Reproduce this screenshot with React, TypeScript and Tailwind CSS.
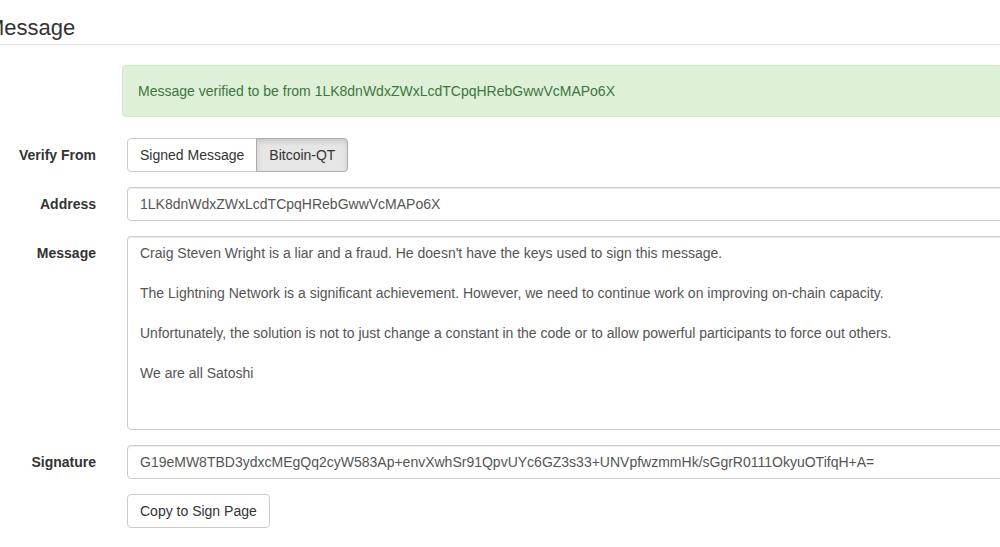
import React from 'react';

const ADDRESS = '1LK8dnWdxZWxLcdTCpqHRebGwwVcMAPo6X';
const SIGNATURE =
  'G19eMW8TBD3ydxcMEgQq2cyW583Ap+envXwhSr91QpvUYc6GZ3s33+UNVpfwzmmHk/sGgrR0111OkyuOTifqH+A=';
const MESSAGE = [
  "Craig Steven Wright is a liar and a fraud. He doesn't have the keys used to sign this message.",
  '',
  'The Lightning Network is a significant achievement. However, we need to continue work on improving on-chain capacity.',
  '',
  'Unfortunately, the solution is not to just change a constant in the code or to allow powerful participants to force out others.',
  '',
  'We are all Satoshi',
].join('\n');

const inputCls =
  'block h-[34px] w-full rounded-[4px] border border-[#ccc] bg-white px-3 text-[14px] text-[#555] shadow-[inset_0_1px_1px_rgba(0,0,0,0.075)] outline-none';

function Row({ label, children, className = '' }: { label: string; children: React.ReactNode; className?: string }) {
  return (
    <div className={`flex gap-[31px] ${className}`}>
      <label className="w-[96px] shrink-0 pt-[7px] text-right text-[14px] font-bold leading-5 text-[#333]">{label}</label>
      <div className="flex-1">{children}</div>
    </div>
  );
}

export default function App() {
  return (
    <div
      className="h-[547px] w-[1000px] overflow-hidden bg-white text-[#333]"
      style={{ fontFamily: '"Liberation Sans", Arial, sans-serif' }}
    >
      <div className="w-[1120px]">
        <h2 className="ml-[-14px] border-b border-[#e5e5e5] pb-1 pt-4 text-[22px] font-normal leading-6">Message</h2>

        <div className="ml-[122px] mt-5 rounded-[4px] border border-[#d6e9c6] bg-[#dff0d8] px-[15px] py-[15px] text-[14px] leading-5 text-[#3c763d]">
          Message verified to be from {ADDRESS}
        </div>

        <Row label="Verify From" className="mt-[21px]">
          <div className="flex text-[14px] leading-5 text-[#333]">
            <button className="h-[34px] rounded-l-[4px] border border-[#ccc] bg-white px-3">Signed Message</button>
            <button className="-ml-px h-[34px] rounded-r-[4px] border border-[#adadad] bg-[#e6e6e6] px-3 shadow-[inset_0_3px_5px_rgba(0,0,0,0.125)]">
              Bitcoin-QT
            </button>
          </div>
        </Row>

        <Row label="Address" className="mt-[15px]">
          <input className={inputCls} readOnly value={ADDRESS} />
        </Row>

        <Row label="Message" className="mt-[15px]">
          <textarea
            className="block h-[194px] w-full resize-none rounded-[4px] border border-[#ccc] bg-white px-3 py-[6px] text-[14px] leading-5 text-[#555] shadow-[inset_0_1px_1px_rgba(0,0,0,0.075)] outline-none"
            readOnly
            value={MESSAGE}
          />
        </Row>

        <Row label="Signature" className="mt-[15px]">
          <input className={inputCls} readOnly value={SIGNATURE} />
        </Row>

        <div className="ml-[127px] mt-[15px]">
          <button className="h-[34px] rounded-[4px] border border-[#ccc] bg-white px-3 text-[14px] leading-5 text-[#333]">
            Copy to Sign Page
          </button>
        </div>
      </div>
    </div>
  );
}
